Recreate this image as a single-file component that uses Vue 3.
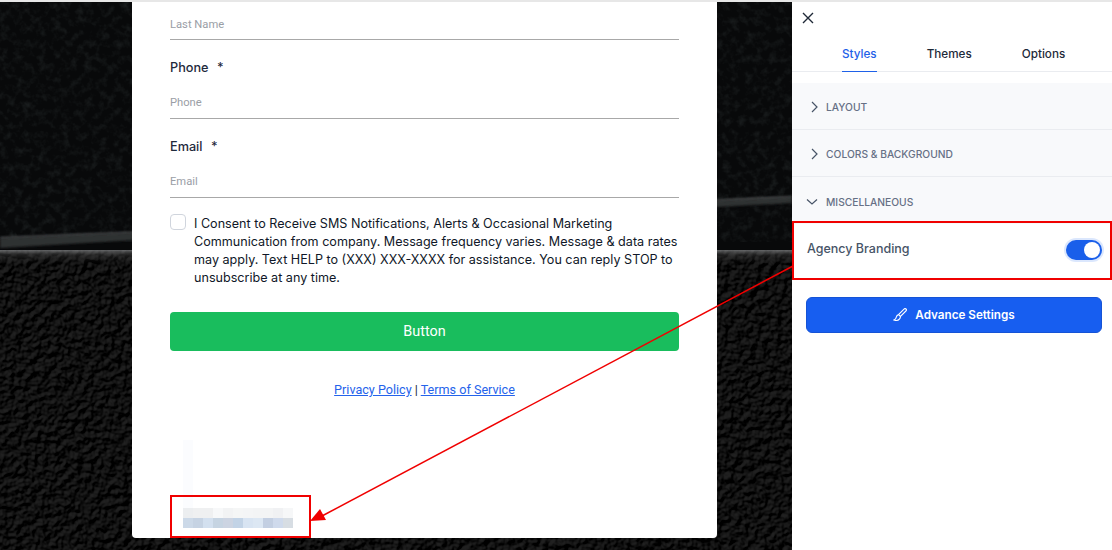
<template>
  <div class="page">
    <svg class="backdrop" width="1112" height="550" viewBox="0 0 1112 550">
      <defs>
        <filter id="grain" x="0" y="0" width="100%" height="100%" color-interpolation-filters="sRGB">
          <feTurbulence type="fractalNoise" baseFrequency="0.13" numOctaves="3" seed="7" />
          <feColorMatrix type="matrix" values="0 0 0 0 0.55  0 0 0 0 0.62  0 0 0 0 0.62  1.3 0 0 0 -0.58" />
        </filter>
        <filter id="pebble" x="0" y="0" width="100%" height="100%" color-interpolation-filters="sRGB">
          <feTurbulence type="fractalNoise" baseFrequency="0.15" numOctaves="2" seed="11" />
          <feDiffuseLighting surfaceScale="2.4" diffuseConstant="1" lighting-color="#fff">
            <feDistantLight azimuth="235" elevation="55" />
          </feDiffuseLighting>
          <feColorMatrix type="matrix" values="0.34 0 0 0 -0.21  0.34 0 0 0 -0.21  0.34 0 0 0 -0.21  0 0 0 1 0" />
        </filter>
        <filter id="soft"><feGaussianBlur stdDeviation="0.8" /></filter>
        <linearGradient id="sheen" x1="0" y1="0" x2="0" y2="1">
          <stop offset="0" stop-color="#8a8c8e" stop-opacity="0.7" />
          <stop offset="0.35" stop-color="#555" stop-opacity="0.35" />
          <stop offset="1" stop-color="#222" stop-opacity="0" />
        </linearGradient>
      </defs>
      <rect width="1112" height="550" fill="#08090a" />
      <rect width="1112" height="240" filter="url(#grain)" opacity="0.22" />
      <rect y="248" width="1112" height="302" filter="url(#pebble)" />
      <path d="M0 236L135 230.500L717 198.500L792 195L792 201L717 205L135 238L0 246Z" fill="#2f3132" filter="url(#soft)" />
      <path d="M0 235.500L135 230L717 198L792 194.500" stroke="#626466" stroke-width="1.2" fill="none" filter="url(#soft)" />
      <rect y="248" width="1112" height="14" fill="url(#sheen)" />
    </svg>

    <div class="stage">
      <form class="card">
        <div class="field first">
          <div class="fake-input">Last Name</div>
        </div>
        <div class="field">
          <label>Phone <span class="req">*</span></label>
          <div class="fake-input">Phone</div>
        </div>
        <div class="field">
          <label>Email <span class="req">*</span></label>
          <div class="fake-input">Email</div>
        </div>

        <div class="consent">
          <span class="box"></span>
          <p>I Consent to Receive SMS Notifications, Alerts &amp; Occasional Marketing Communication from company. Message frequency varies. Message &amp; data rates may apply. Text HELP to (XXX) XXX-XXXX for assistance. You can reply STOP to unsubscribe at any time.</p>
        </div>

        <button type="button" class="submit">Button</button>

        <div class="legal">
          <a href="#">Privacy Policy</a> | <a href="#">Terms of Service</a>
        </div>

        <div class="branding">
          <div class="blur-stem"></div>
          <div class="blur-row">
            <i v-for="(c, i) in topBlur" :key="i" :style="{ background: c }"></i>
          </div>
          <div class="blur-row">
            <i v-for="(c, i) in bottomBlur" :key="i" :style="{ background: c }"></i>
          </div>
        </div>
      </form>
    </div>

    <aside class="panel">
      <button type="button" class="close" aria-label="Close">
        <svg width="12" height="12" viewBox="0 0 12 12"><path d="M1 1l10 10M11 1L1 11" stroke="#1f2937" stroke-width="1.4" fill="none" /></svg>
      </button>
      <nav class="tabs">
        <a v-for="t in tabs" :key="t" class="tab" :class="{ active: t === 'Styles' }">{{ t }}</a>
      </nav>

      <div class="sections">
        <div v-for="s in sections" :key="s.label" class="section">
          <svg v-if="s.open" width="12" height="12" viewBox="0 0 12 12"><path d="M1 3.500l5 4.500 5-4.500" stroke="#475467" stroke-width="1.2" fill="none" /></svg>
          <svg v-else width="12" height="12" viewBox="0 0 12 12"><path d="M6 1l5 5-5 5" stroke="#475467" stroke-width="1.2" fill="none" /></svg>
          <span>{{ s.label }}</span>
        </div>
      </div>

      <div class="toggle-row">
        <span class="toggle-label">Agency Branding</span>
        <span class="toggle"><span class="knob"></span></span>
      </div>

      <button type="button" class="advance">
        <svg width="14" height="14" viewBox="0 0 14 14" fill="none" stroke="#fff" stroke-width="1.1">
          <path d="M13 1c-.6-.6-1.400-.5-2 .1L5.600 6.600l1.800 1.800L12.900 3c.6-.6.700-1.400.1-2z" />
          <path d="M5.600 6.600C4 6.900 3.500 8 3.300 9.200 3.100 10.500 2.300 11.500 1 12c2 .8 4.300.5 5.400-.8.800-.9 1.100-1.900 1-2.800" />
        </svg>
        Advance Settings
      </button>
    </aside>

    <!-- annotation layer from the screenshot tool -->
    <div class="mark mark-toggle"></div>
    <div class="mark mark-brand"></div>
    <svg class="arrow" width="1112" height="550" viewBox="0 0 1112 550">
      <path d="M793 266L322 516" stroke="#f00000" stroke-width="1.5" fill="none" />
      <path d="M310 521L320 509L326 520Z" fill="#f00000" />
    </svg>
  </div>
</template>

<script setup>
const tabs = ['Styles', 'Themes', 'Options']

const sections = [
  { label: 'LAYOUT', open: false },
  { label: 'COLORS & BACKGROUND', open: false },
  { label: 'MISCELLANEOUS', open: true }
]

// pixelated logo blur in the card's footer
const topBlur = ['#eceef0', '#eff0f1', '#eff0f1', '#f7f8f9', '#f2f3f4', '#f5f6f6', '#f4f5f6', '#f3f4f5', '#f3f4f5', '#f0f1f3', '#f6f7f8']
const bottomBlur = ['#ccd9e8', '#c6d3e3', '#d3e0ef', '#c6d4e2', '#ccd4e2', '#c2d3e6', '#d8e4f2', '#dce7f3', '#c3cfe2', '#cfdaec', '#d7dde3']
</script>

<style>
body {
  margin: 0;
}
</style>

<style scoped>
.page {
  position: relative;
  display: flex;
  width: 1112px;
  height: 550px;
  overflow: hidden;
  box-sizing: border-box;
  padding-top: 2px;
  font-family: Inter, "Liberation Sans", sans-serif;
  background: #e7e7e7;
}

.backdrop {
  position: absolute;
  left: 0;
  top: 2px;
}

.stage {
  position: relative;
  flex: 1;
  padding-left: 132px;
}

.card {
  box-sizing: border-box;
  width: 585px;
  height: 536px;
  padding: 0 38px;
  background: #fff;
  border-radius: 0 0 4px 4px;
}

.field {
  margin-bottom: 17px;
}

.field label {
  display: block;
  height: 20px;
  padding-top: 1px;
  margin-bottom: 3px;
  font-size: 12.7px;
  font-weight: 500;
  line-height: 20px;
  color: #1f2a3c;
}

.req {
  margin-left: 5px;
}

.fake-input {
  box-sizing: border-box;
  height: 38px;
  padding-top: 14px;
  border-bottom: 1px solid #a8a8a8;
  font-family: Roboto, sans-serif;
  font-size: 11.2px;
  line-height: 16px;
  color: #9a9ea6;
}

.field.first .fake-input {
  padding-top: 15px;
}

.consent {
  display: flex;
  gap: 8px;
  margin-top: -1px;
}

.box {
  flex: none;
  box-sizing: border-box;
  width: 16px;
  height: 16px;
  border: 1px solid #d0d5dd;
  border-radius: 4px;
}

.consent p {
  margin: 1px 0 0;
  font-size: 12.6px;
  line-height: 18px;
  color: #101828;
}

.submit {
  display: block;
  width: 100%;
  height: 39px;
  margin-top: 25px;
  border: 0;
  border-radius: 4px;
  background: #19bd5d;
  color: #fff;
  font-family: Roboto, sans-serif;
  font-size: 14.4px;
  font-weight: 400;
}

.legal {
  margin-top: 30px;
  font-family: Roboto, sans-serif;
  font-size: 12.6px;
  line-height: 18px;
  text-align: center;
  color: #1f2a3c;
}

.legal a {
  color: #2463eb;
}

.branding {
  position: relative;
  margin: 41px 0 0 13px;
  width: 110px;
}

.blur-stem {
  width: 10px;
  height: 68px;
  background: #fbfcfe;
}

.blur-row {
  display: flex;
  height: 10px;
}

.blur-row i {
  width: 10px;
}

.panel {
  position: relative;
  z-index: 1;
  flex: none;
  width: 320px;
  background: #fff;
}

.close {
  position: absolute;
  left: 10px;
  top: 10px;
  width: 12px;
  height: 12px;
  padding: 0;
  border: 0;
  background: none;
  line-height: 0;
}

.tabs {
  display: flex;
  align-items: flex-end;
  height: 70px;
  box-sizing: border-box;
  padding-left: 50px;
  gap: 50px;
  border-bottom: 1px solid #eaecf0;
}

.tab {
  box-sizing: border-box;
  height: 28px;
  margin-bottom: -1px;
  font-size: 11.7px;
  font-weight: 500;
  line-height: 20px;
  color: #1d2939;
}

.tab.active {
  color: #1f61e8;
  border-bottom: 1px solid #1f61e8;
}

.sections {
  margin-top: 11px;
  background: #f8f9fb;
}

.section {
  display: flex;
  align-items: center;
  box-sizing: border-box;
  height: 47px;
  padding: 2px 0 0 14px;
  gap: 8px;
  border-bottom: 1px solid #eaecf0;
  font-size: 10.25px;
  font-weight: 500;
  color: #667085;
}

.section:last-child {
  border-bottom: 0;
}

.toggle-row {
  display: flex;
  align-items: center;
  justify-content: space-between;
  height: 52px;
  padding: 0 10px 0 15px;
  font-size: 12.5px;
  font-weight: 500;
  color: #475467;
}

.toggle-label {
  margin-top: -3px;
}

.toggle {
  position: relative;
  display: block;
  width: 36px;
  height: 20px;
  border-radius: 10px;
  background: #1a5fea;
  box-shadow: 0 0 0 2px #dbe7fd;
}

.knob {
  position: absolute;
  right: 2px;
  top: 2px;
  width: 16px;
  height: 16px;
  border-radius: 50%;
  background: #fff;
}

.advance {
  display: flex;
  align-items: center;
  justify-content: center;
  gap: 8px;
  box-sizing: border-box;
  width: 296px;
  height: 36px;
  margin: 21px 0 0 14px;
  padding-bottom: 2px;
  border: 1px solid #1553d6;
  border-radius: 6px;
  background: #175ef0;
  color: #fff;
  font-family: Inter, sans-serif;
  font-size: 11.7px;
  font-weight: 600;
}

.mark {
  position: absolute;
  z-index: 2;
  box-sizing: border-box;
  border: 2px solid #f00000;
}

.mark-toggle {
  left: 792px;
  top: 221px;
  width: 320px;
  height: 59px;
}

.mark-brand {
  left: 170px;
  top: 495px;
  width: 141px;
  height: 43px;
}

.arrow {
  position: absolute;
  z-index: 2;
  left: 0;
  top: 0;
  pointer-events: none;
}
</style>
